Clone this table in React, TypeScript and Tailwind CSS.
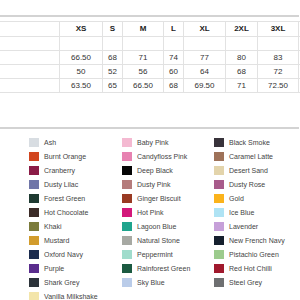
const sizes = ["XS", "S", "M", "L", "XL", "2XL", "3XL"];
const widths = ["w-[43px]", "w-[20px]", "w-[41px]", "w-[20px]", "w-[42px]", "w-[32px]", "w-[41px]"];

const rows: string[][] = [
  ["", "", "", "", "", "", ""],
  ["66.50", "68", "71", "74", "77", "80", "83"],
  ["50", "52", "56", "60", "64", "68", "72"],
  ["63.50", "65", "66.50", "68", "69.50", "71", "72.50"],
];

const colours: [string, string][][] = [
  [
    ["Ash", "#d8dde2"],
    ["Burnt Orange", "#d2461f"],
    ["Cranberry", "#8b1c47"],
    ["Dusty Lilac", "#7076a8"],
    ["Forest Green", "#1e3a31"],
    ["Hot Chocolate", "#3b2b27"],
    ["Khaki", "#7b7b3b"],
    ["Mustard", "#d29c2c"],
    ["Oxford Navy", "#1b2b4e"],
    ["Purple", "#5a2d8d"],
    ["Shark Grey", "#2c333a"],
    ["Vanilla Milkshake", "#f3e5aa"],
  ],
  [
    ["Baby Pink", "#f4b9d1"],
    ["Candyfloss Pink", "#e782b1"],
    ["Deep Black", "#060606"],
    ["Dusty Pink", "#b57c7c"],
    ["Ginger Biscuit", "#993a23"],
    ["Hot Pink", "#d3187b"],
    ["Lagoon Blue", "#1fa48d"],
    ["Natural Stone", "#a7a9a3"],
    ["Peppermint", "#a0dccc"],
    ["Rainforest Green", "#1b5a41"],
    ["Sky Blue", "#bacce9"],
  ],
  [
    ["Black Smoke", "#38333b"],
    ["Caramel Latte", "#9e7259"],
    ["Desert Sand", "#e3d4ab"],
    ["Dusty Rose", "#a85b8b"],
    ["Gold", "#fbb31b"],
    ["Ice Blue", "#afe3f4"],
    ["Lavender", "#c6a0d9"],
    ["New French Navy", "#15202e"],
    ["Pistachio Green", "#9ccb8d"],
    ["Red Hot Chilli", "#a0192d"],
    ["Steel Grey", "#6e6f71"],
  ],
];

export default function App() {
  return (
    <div className="h-[300px] w-[300px] overflow-hidden bg-white font-['Liberation_Sans',Arial,sans-serif] text-[#333]">
      <div className="mt-[15px] h-[2px] w-[299px] bg-[#d3d3d3]" />

      {/* size chart */}
      <div className="mt-[4px] border-t border-[#e2e2e2]">
        <div className="flex h-[15px] border-b border-[#e2e2e2]">
          <div className="w-[60px] border-r border-[#e2e2e2]" />
          {sizes.map((s, i) => (
            <div
              key={s}
              className={`${widths[i]} flex items-center justify-center border-r border-[#e2e2e2] text-[8px] font-bold text-[#222]`}
            >
              {s}
            </div>
          ))}
        </div>
        {rows.map((r, ri) => (
          <div key={ri} className="flex h-[14px] border-b border-[#e2e2e2]">
            <div className="w-[60px] border-r border-[#e2e2e2]" />
            {r.map((v, i) => (
              <div
                key={i}
                className={`${widths[i]} flex items-center justify-center border-r border-[#e2e2e2] text-[8px] leading-none`}
              >
                {v}
              </div>
            ))}
          </div>
        ))}
      </div>

      <div className="mt-[34px] h-[2px] w-[299px] bg-[#d3d3d3]" />

      {/* colour list */}
      <div className="mt-[6px] grid grid-cols-[93px_92px_1fr] pl-[29px]">
        {colours.map((col, ci) => (
          <div key={ci} className="flex flex-col">
            {col.map(([name, hex]) => (
              <div key={name} className="flex h-[14px] items-center gap-[5px]">
                <span className="h-[9px] w-[10px] shrink-0" style={{ backgroundColor: hex }} />
                <span className="whitespace-nowrap text-[7px] leading-none text-[#444]">{name}</span>
              </div>
            ))}
          </div>
        ))}
      </div>
    </div>
  );
}
